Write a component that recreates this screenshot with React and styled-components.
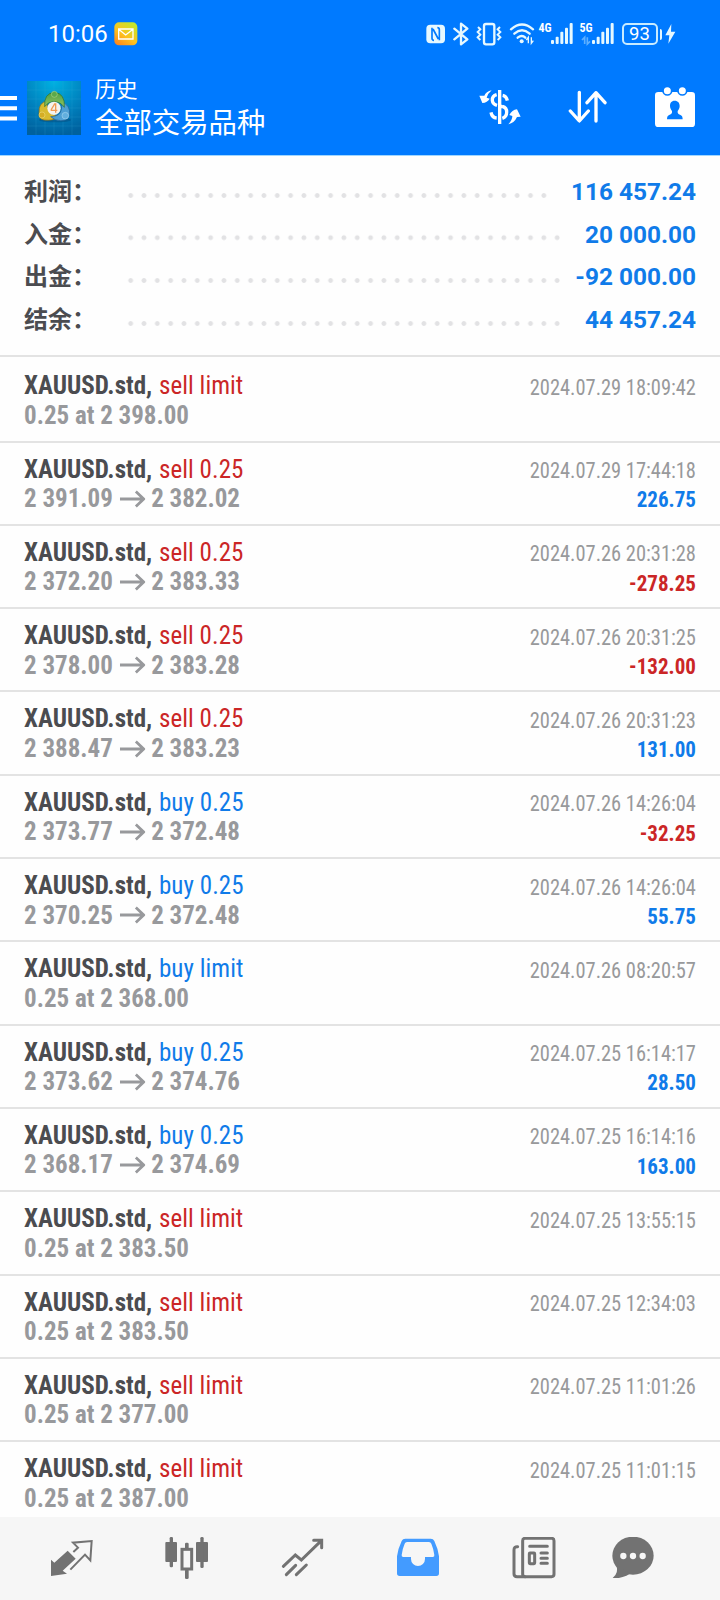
import React from 'react';
import styled, { createGlobalStyle } from 'styled-components';

const GlobalStyle = createGlobalStyle`
    * {
        box-sizing: border-box;
    }
    body {
        margin: 0;
        background: #fefefe;
        font-family: Roboto, "Noto Sans CJK SC", sans-serif;
    }
    svg {
        display: block;
        flex: none;
    }
`;

const Screen = styled.div`
    display: flex;
    flex-direction: column;
    width: 720px;
    height: 1600px;
    overflow: hidden;
`;

const Top = styled.header`
    height: 156px;
    flex: none;
    background: #007aff;
    border-bottom: 1px solid #9fd6ff;
    color: #fff;
`;

const StatusBar = styled.div`
    display: flex;
    align-items: center;
    height: 68px;
    padding: 0 44px 0 48px;
`;

const Clock = styled.span`
    width: 66px;
    font-size: 24px;
    line-height: 68px;
`;

const StatusIcons = styled.div`
    display: flex;
    align-items: center;
    margin-left: auto;
    gap: 7px;
`;

const SignalBox = styled.div`
    display: flex;
    height: 22px;
    margin-left: ${({ $tight }) => ($tight ? '-3px' : '0')};
`;

const SignalLabel = styled.span`
    width: 12px;
    font-size: 12px;
    font-weight: 700;
    line-height: 10px;
    font-stretch: 75%;
`;

const AppBar = styled.div`
    display: flex;
    align-items: center;
    height: 78px;
    padding-right: 25px;
`;

const AppIcon = styled.div`
    margin: 1px 14px 0 10px;
`;

const Titles = styled.div`
    flex: 1;
    padding-top: 5px;
`;

const Subtitle = styled.div`
    font-size: 21.3px;
    line-height: 28px;
`;

const Title = styled.div`
    font-size: 28.4px;
    line-height: 40px;
`;

const Actions = styled.div`
    display: flex;
    align-items: center;
    gap: 47px;
`;

const Summary = styled.section`
    height: 201px;
    flex: none;
    padding: 14.6px 24px 0;
    border-bottom: 2px solid #e3e3e3;
`;

const SummaryRow = styled.div`
    display: flex;
    align-items: center;
    height: 42.67px;
`;

const SummaryLabel = styled.span`
    width: 100px;
    color: #4b4c50;
    font-size: 24px;
    font-weight: 700;
    line-height: 42px;
`;

const Dots = styled.span`
    width: ${({ $count }) => $count * 13.333}px;
    height: 13.333px;
    margin-top: 7px;
    background: radial-gradient(circle, #e2e2e4 2px, transparent 2.8px) 0 0 / 13.333px 13.333px;
`;

const SummaryValue = styled.span`
    flex: 1;
    color: #107be9;
    font-size: 24.4px;
    font-weight: 700;
    line-height: 42px;
    text-align: right;
    white-space: nowrap;
`;

const List = styled.main`
    flex: 1;
    min-height: 0;
    padding-top: 2.3px;
    overflow: hidden;
`;

const Deal = styled.div`
    display: flex;
    justify-content: space-between;
    height: 83.3px;
    padding: 11px 24px 0;
    border-bottom: 2px solid #e3e3e3;
    font-stretch: 75%;
    white-space: nowrap;
`;

const Line = styled.div`
    display: flex;
    align-items: center;
    height: 29.5px;
    font-size: 26.6px;
    line-height: 29.5px;
    transform: scaleX(0.94);
    transform-origin: left;
`;

const Symbol = styled.span`
    margin-right: 7.2px;
    color: #4b4c50;
    font-weight: 700;
`;

const Side = styled.span`
    color: ${({ $sell }) => ($sell ? '#cb2626' : '#107be9')};
    letter-spacing: 0.07px;
`;

const Price = styled.span`
    color: #98999c;
    font-weight: 700;
`;

const Arrow = styled.svg`
    margin: 2px 6.5px 0 7.3px;
`;

const DealInfo = styled.div`
    padding-top: 2.5px;
    font-size: 21.5px;
    line-height: 29.3px;
    text-align: right;
`;

const Time = styled.div`
    color: #98999b;
    transform: scaleX(0.95);
    transform-origin: right;
`;

const Profit = styled.div`
    color: ${({ $loss }) => ($loss ? '#cb2626' : '#107be9')};
    font-weight: 700;
    transform: scaleX(0.978);
    transform-origin: right;
`;

const Nav = styled.nav`
    display: grid;
    grid-template-columns: repeat(5, 115.5px) 83px;
    justify-items: center;
    height: 83px;
    flex: none;
    padding: 20px 0 0 14px;
    background: #f6f6f6;
`;

const summary = [
    { label: '利润：', value: '116 457.24', dots: 32 },
    { label: '入金：', value: '20 000.00', dots: 33 },
    { label: '出金：', value: '-92 000.00', dots: 33 },
    { label: '结余：', value: '44 457.24', dots: 33 },
];

const deals = [
    { side: 'sell limit', price: '0.25 at 2 398.00', time: '2024.07.29 18:09:42' },
    { side: 'sell 0.25', price: '2 391.09', close: '2 382.02', time: '2024.07.29 17:44:18', profit: '226.75' },
    { side: 'sell 0.25', price: '2 372.20', close: '2 383.33', time: '2024.07.26 20:31:28', profit: '-278.25' },
    { side: 'sell 0.25', price: '2 378.00', close: '2 383.28', time: '2024.07.26 20:31:25', profit: '-132.00' },
    { side: 'sell 0.25', price: '2 388.47', close: '2 383.23', time: '2024.07.26 20:31:23', profit: '131.00' },
    { side: 'buy 0.25', price: '2 373.77', close: '2 372.48', time: '2024.07.26 14:26:04', profit: '-32.25' },
    { side: 'buy 0.25', price: '2 370.25', close: '2 372.48', time: '2024.07.26 14:26:04', profit: '55.75' },
    { side: 'buy limit', price: '0.25 at 2 368.00', time: '2024.07.26 08:20:57' },
    { side: 'buy 0.25', price: '2 373.62', close: '2 374.76', time: '2024.07.25 16:14:17', profit: '28.50' },
    { side: 'buy 0.25', price: '2 368.17', close: '2 374.69', time: '2024.07.25 16:14:16', profit: '163.00' },
    { side: 'sell limit', price: '0.25 at 2 383.50', time: '2024.07.25 13:55:15' },
    { side: 'sell limit', price: '0.25 at 2 383.50', time: '2024.07.25 12:34:03' },
    { side: 'sell limit', price: '0.25 at 2 377.00', time: '2024.07.25 11:01:26' },
    { side: 'sell limit', price: '0.25 at 2 387.00', time: '2024.07.25 11:01:15' },
];

const MailIcon = () => (
    <svg width="24" height="24" viewBox="0 0 72 72">
        <defs>
            <linearGradient id="mail" x1="0" y1="1" x2="0.7" y2="0">
                <stop offset="0" stopColor="#ff7a1c" />
                <stop offset="0.5" stopColor="#fdc21f" />
                <stop offset="1" stopColor="#c4e62c" />
            </linearGradient>
        </defs>
        <rect x="1" y="1" width="69" height="69" rx="14" fill="url(#mail)" />
        <path d="M14 21h43v30H14zM14 22l21 17 22-17" fill="none" stroke="#fff" strokeWidth="4" />
    </svg>
);

const NfcIcon = () => (
    <svg width="20" height="20" viewBox="48 72 60 60">
        <rect x="49" y="74" width="56" height="56" rx="12" fill="#e6f8ff" />
        <path d="M66 83v32q0 6 6 6M88 121V89q0-6-6-6M69 87l16 30" fill="none" stroke="#007aff" strokeWidth="5" />
    </svg>
);

const BluetoothIcon = () => (
    <svg width="16" height="24" viewBox="127 66 48 72">
        <path d="M131 86l39 32-19 15V71l19 15-39 32" fill="none" stroke="#e6f8ff" strokeWidth="7" strokeLinejoin="round" strokeLinecap="round" />
    </svg>
);

const VibrateIcon = () => (
    <svg width="26" height="24" viewBox="199 66 78 72">
        <rect x="223" y="72" width="31" height="61" rx="6" fill="none" stroke="#e6f8ff" strokeWidth="7" />
        <path d="M205 81l7 7-8 8 8 8-8 8 8 8M271 81l-7 7 8 8-8 8 8 8-8 8" fill="none" stroke="#e6f8ff" strokeWidth="6" />
    </svg>
);

const WifiIcon = () => (
    <svg width="26" height="24" viewBox="294 66 78 72">
        <g fill="none" stroke="#e6f8ff" strokeWidth="7" strokeLinecap="round">
            <path d="M300 88q33-29 66 0" />
            <path d="M310 101q23-20 46 0" />
            <path d="M320 113q13-10 23 0" />
        </g>
        <circle cx="332" cy="124" r="6" fill="#e6f8ff" />
        <path d="M352 130v-18l-6 8M361 112v18l6-8" fill="none" stroke="#e6f8ff" strokeWidth="4" />
    </svg>
);

const SignalIcon = ({ label, dim, tight }) => (
    <SignalBox $tight={tight}>
        <SignalLabel>{label}</SignalLabel>
        <svg width="22" height="22" viewBox="0 0 66 66" overflow="visible">
            <g fill="#e6f8ff">
                <rect x="0" y="51" width="9" height="12" rx="3" />
                <rect x="14" y="41" width="9" height="22" rx="3" />
                <rect x="28" y="26" width="9" height="37" rx="3" />
                <rect x="42" y="14" width="9" height="49" rx="3" />
                <rect x="56" y="0" width="9" height="63" rx="3" />
            </g>
            {dim && <path d="M-22 63v-20l-8 8M-14 43v20l8-8" fill="none" stroke="#5fb0ff" strokeWidth="5" />}
        </svg>
    </SignalBox>
);

const BatteryBox = styled.div`
    display: flex;
    align-items: center;
    gap: 2px;
    margin: 0 -1px 0 1px;
`;

const BatteryBody = styled.span`
    width: 36px;
    height: 22px;
    border: 2px solid #c8ebff;
    border-radius: 5px;
    font-size: 18.5px;
    line-height: 18px;
    text-align: center;
`;

const BatteryTip = styled.span`
    width: 2.5px;
    height: 11px;
    border-radius: 0 2px 2px 0;
    background: #e6f8ff;
`;

const Battery = () => (
    <BatteryBox>
        <BatteryBody>93</BatteryBody>
        <BatteryTip />
        <svg width="13" height="22" viewBox="762 69 39 66">
            <path d="M784 72l-18 34h12l-3 25 21-36h-13z" fill="#e6f8ff" />
        </svg>
    </BatteryBox>
);

const MenuIcon = () => (
    <svg width="17" height="28" viewBox="0 -2 17 28">
        <path d="M0 3h17M0 13.3h17M0 23.5h17" stroke="#fff" strokeWidth="4" />
    </svg>
);

const LogoIcon = () => (
    <svg width="54" height="54" viewBox="81 241 162 162">
        <defs>
            <radialGradient id="sky" cx="0.5" cy="0" r="1">
                <stop offset="0" stopColor="#00b2e2" />
                <stop offset="0.6" stopColor="#0080bd" />
                <stop offset="1" stopColor="#00619e" />
            </radialGradient>
            <linearGradient id="green" x1="0" y1="0" x2="0" y2="1">
                <stop offset="0" stopColor="#4d9f43" />
                <stop offset="1" stopColor="#94c664" />
            </linearGradient>
        </defs>
        <rect x="81" y="241" width="162" height="162" fill="url(#sky)" />
        <path d="M108 241v162M135 241v162M162 241v162M189 241v162M216 241v162M81 268h162M81 295h162M81 322h162M81 349h162M81 376h162" stroke="#3bb4df" strokeOpacity="0.35" strokeWidth="1.5" />
        <ellipse cx="165" cy="358" rx="48" ry="7" fill="#034b7d" opacity="0.5" />
        <path d="M142 301q-27 4-25 36-2 18 15 21 30 4 48-12-28-1-33-17-8-13-5-28z" fill="#d8ba2f" stroke="#826b1d" strokeWidth="2" />
        <path d="M182 302q32 12 26 42-5 17-26 16-18 0-30-12 27-1 31-18 5-12-1-28z" fill="#4d9fd4" stroke="#235f94" strokeWidth="2" />
        <path d="M134 318q-3-40 29-43 33 3 30 45-10-16-30-17-18 0-29 15z" fill="url(#green)" stroke="#256b33" strokeWidth="2" />
        <circle cx="163" cy="281" r="9" fill="#5aa94a" stroke="#c0dc95" strokeWidth="1.5" />
        <circle cx="126" cy="343" r="9" fill="#d5ad24" stroke="#f3e58a" strokeWidth="1.5" />
        <circle cx="196" cy="345" r="10" fill="#62afde" stroke="#b5def4" strokeWidth="1.5" />
        <circle cx="162" cy="323" r="20" fill="#f5f3ee" />
        <path d="M167 336v-26h-3l-10 16v3h18" fill="none" stroke="#ef9a55" strokeWidth="4" />
    </svg>
);

const CurrencyIcon = () => (
    <svg width="42" height="36" viewBox="87 75 126 108">
        <g fill="none" stroke="#fff" strokeWidth="10">
            <path d="M149 78v102" />
            <path d="M172 110q-3-14-14-16M140 92q-14 4-13 17 1 11 14 15M157 127q14 4 13 18 0 14-13 18M140 162q-14-1-17-17" />
            <path d="M149 125l9 4" />
        </g>
        <path d="M125 79q-17 4-22 16l-15 0 9 22q15-1 22-13l-9-3q3-12 15-22z" fill="#fff" />
        <path d="M175 181q18-4 26-22l11-1-11-22q-15 2-23 17l9 3q0 12-12 25z" fill="#fff" />
    </svg>
);

const SortIcon = () => (
    <svg width="40" height="36" viewBox="354 75 120 108">
        <path d="M388 85v85M361 141l27 30 27-30M438 171V86M411 116l27-30 27 30" fill="none" stroke="#fff" strokeWidth="10" strokeLinecap="round" strokeLinejoin="round" />
    </svg>
);

const CalendarIcon = () => (
    <svg width="40" height="42" viewBox="615 63 120 126">
        <rect x="615" y="81" width="120" height="105" rx="10" fill="#fff" />
        <circle cx="652" cy="77" r="13" fill="#fff" stroke="#007aff" strokeWidth="5" />
        <circle cx="697" cy="77" r="13" fill="#fff" stroke="#007aff" strokeWidth="5" />
        <path d="M674 107c-10 0-14 7-14 16 0 7 3 11 6 15 1 7-2 9-7 11-6 2-8 6-8 14h47c0-8-2-12-8-14-5-2-8-4-7-11 3-4 6-8 6-15 0-9-5-16-15-16z" fill="#007aff" />
    </svg>
);

const TradeIcon = () => (
    <svg width="44" height="42" viewBox="150 111 132 126">
        <path d="M153 228v-49l10 9 40-36 24 24-39 36 13 9z" fill="#727272" />
        <path d="M220 156l14-13-15-15 56-5-4 58-16-17-44 45" fill="none" stroke="#727272" strokeWidth="6" />
    </svg>
);

const CandlesIcon = () => (
    <svg width="44" height="42" viewBox="495 111 132 126">
        <g fill="#727272">
            <rect x="496" y="126" width="35" height="60" rx="3" />
            <rect x="509" y="111" width="10" height="91" rx="4" />
            <rect x="588" y="126" width="36" height="60" rx="3" />
            <rect x="601" y="111" width="10" height="93" rx="4" />
            <rect x="555" y="128" width="11" height="18" rx="4" />
            <rect x="555" y="208" width="11" height="29" rx="4" />
        </g>
        <rect x="546" y="148" width="29" height="59" fill="none" stroke="#727272" strokeWidth="9" />
    </svg>
);

const TrendIcon = () => (
    <svg width="44" height="42" viewBox="842 111 132 126">
        <g fill="none" stroke="#727272" strokeWidth="9" strokeLinecap="round">
            <path d="M849 199l36-34 18 15 60-58M940 121h24v22" />
            <path d="M858 224l28-28M888 224l30-29" />
        </g>
    </svg>
);

const InboxIcon = () => (
    <svg width="44" height="42" viewBox="108 111 132 126">
        <path
            fillRule="evenodd"
            fill="#439bff"
            d="M136 116h76q8 0 11 7 11 23 14 46v51q0 8-8 8H119q-8 0-8-8v-51q3-23 14-46 3-7 11-7zM141 126q-5 0-7 5-7 16-9 34-1 6 5 6h23v6a21 21 0 0 0 42 0v-6h23q6 0 5-6-2-18-9-34-2-5-7-5z"
        />
    </svg>
);

const NewsIcon = () => (
    <svg width="44" height="42" viewBox="457 111 132 126">
        <g fill="none" stroke="#727272" strokeWidth="9" strokeLinecap="round">
            <rect x="489" y="115" width="94" height="115" rx="7" />
            <path d="M474 140q-11-1-11 10v72q0 8 9 8h24" />
            <path d="M510 139h53M544 159h19M544 175h19M544 190h19" />
            <rect x="509" y="159" width="16" height="32" rx="2" />
        </g>
    </svg>
);

const ChatIcon = () => (
    <svg width="44" height="42" viewBox="752 111 132 126">
        <ellipse cx="818" cy="167" rx="62" ry="57" fill="#727272" />
        <path d="M768 196q8 24-11 38 28 2 52-13z" fill="#727272" />
        <g fill="#f6f6f6">
            <circle cx="789" cy="168" r="9.5" />
            <circle cx="818" cy="168" r="9.5" />
            <circle cx="847" cy="168" r="9.5" />
        </g>
    </svg>
);

const DealItem = ({ deal }) => {
    const { side, price, close, time, profit } = deal;
    return (
        <Deal>
            <div>
                <Line>
                    <Symbol>XAUUSD.std,</Symbol>
                    <Side $sell={side.startsWith('sell')}>{side}</Side>
                </Line>
                <Line>
                    <Price>{price}</Price>
                    {close && (
                        <>
                            <Arrow width="27" height="18" viewBox="0 0 27 18">
                                <path d="M0 9h25M17 1.5L25.3 9 17 16.5" fill="none" stroke="#98999c" strokeWidth="3" />
                            </Arrow>
                            <Price>{close}</Price>
                        </>
                    )}
                </Line>
            </div>
            <DealInfo>
                <Time>{time}</Time>
                {profit && <Profit $loss={profit.startsWith('-')}>{profit}</Profit>}
            </DealInfo>
        </Deal>
    );
};

const App = () => {
    return (
        <Screen>
            <GlobalStyle />
            <Top>
                <StatusBar>
                    <Clock>10:06</Clock>
                    <MailIcon />
                    <StatusIcons>
                        <NfcIcon />
                        <BluetoothIcon />
                        <VibrateIcon />
                        <WifiIcon />
                        <SignalIcon label="4G" tight />
                        <SignalIcon label="5G" dim />
                        <Battery />
                    </StatusIcons>
                </StatusBar>
                <AppBar>
                    <MenuIcon />
                    <AppIcon>
                        <LogoIcon />
                    </AppIcon>
                    <Titles>
                        <Subtitle>历史</Subtitle>
                        <Title>全部交易品种</Title>
                    </Titles>
                    <Actions>
                        <CurrencyIcon />
                        <SortIcon />
                        <CalendarIcon />
                    </Actions>
                </AppBar>
            </Top>
            <Summary>
                {summary.map(item => (
                    <SummaryRow key={item.label}>
                        <SummaryLabel>{item.label}</SummaryLabel>
                        <Dots $count={item.dots} />
                        <SummaryValue>{item.value}</SummaryValue>
                    </SummaryRow>
                ))}
            </Summary>
            <List>
                {deals.map((deal, index) => (
                    <DealItem key={index} deal={deal} />
                ))}
            </List>
            <Nav>
                <TradeIcon />
                <CandlesIcon />
                <TrendIcon />
                <InboxIcon />
                <NewsIcon />
                <ChatIcon />
            </Nav>
        </Screen>
    );
};

export default App;
